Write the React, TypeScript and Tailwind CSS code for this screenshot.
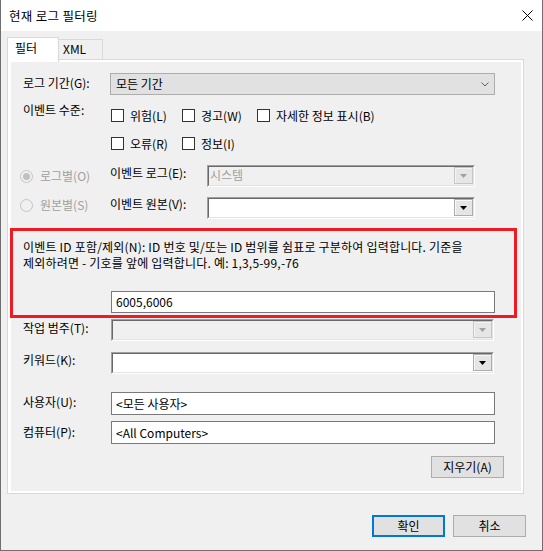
import React from 'react';

// Classic Win32 dialog: "현재 로그 필터링" (Event Viewer filter)

const DropArrow = ({ disabled }: { disabled?: boolean }) => (
  <div
    className={
      disabled
        ? 'flex h-[17px] w-[19px] items-center justify-center border border-[#c6c6c6] bg-[#e6e6e6] shadow-[inset_1px_1px_0_#f4f4f4]'
        : 'flex h-[17px] w-[19px] items-center justify-center border border-[#adadad] bg-[#e5e5e5] shadow-[inset_1px_1px_0_#f8f8f8]'
    }
  >
    <svg width="7" height="4" viewBox="0 0 7 4">
      <polygon points="0,0 7,0 3.5,4" fill={disabled ? '#a0a0a0' : '#000'} />
    </svg>
  </div>
);

// sunken 3D combo box (old style)
const SunkenCombo = ({ className, disabled, text }: { className: string; disabled?: boolean; text?: string }) => (
  <div
    className={`h-[22px] border border-t-[#a0a0a0] border-l-[#a0a0a0] border-r-white border-b-white ${className}`}
  >
    <div
      className={`flex h-full border border-t-[#696969] border-l-[#696969] border-r-[#e3e3e3] border-b-[#e3e3e3] ${
        disabled ? 'bg-[#f0f0f0]' : 'bg-white'
      }`}
    >
      <div className="flex-1 pl-[1px] leading-[16px] text-[#a0a0a0]">{text}</div>
      <DropArrow disabled={disabled} />
    </div>
  </div>
);

const TextBox = ({ className, value }: { className: string; value: string }) => (
  <div className={`flex items-center border border-[#7a7a7a] bg-white pl-[4px] leading-[16px] ${className}`}>
    {value}
  </div>
);

const CheckBox = ({ label, className }: { label: string; className: string }) => (
  <div className={`flex h-[13px] items-center ${className}`}>
    <div className="h-[13px] w-[13px] shrink-0 border border-[#333333] bg-white" />
    <span className="ml-[6px] whitespace-nowrap leading-[16px]">{label}</span>
  </div>
);

const Radio = ({ label, checked }: { label: string; checked?: boolean }) => (
  <div className="flex w-[99px] items-center pl-[9px]">
    <svg width="13" height="13" viewBox="0 0 13 13" className="shrink-0">
      <circle cx="6.5" cy="6.5" r="6" fill="#f0f0f0" stroke="#c4c4c4" />
      {checked && <circle cx="6.5" cy="6.5" r="3.5" fill="#c0c0c0" />}
    </svg>
    <span className="ml-[7px] whitespace-nowrap leading-[16px] text-[#a0a0a0]">{label}</span>
  </div>
);

const Button = ({ label, primary, className }: { label: string; primary?: boolean; className?: string }) => (
  <div
    className={`flex h-[22px] w-[73px] items-center justify-center bg-[#e1e1e1] leading-[16px] ${
      primary ? 'border-2 border-[#0078d7]' : 'border border-[#adadad]'
    } ${className ?? ''}`}
  >
    {label}
  </div>
);

export default function App() {
  return (
    <div className="flex h-[551px] w-[543px] flex-col border-x border-b border-[#6f6f6f] bg-[#f0f0f0] font-['Noto_Sans_CJK_KR','Malgun_Gothic',sans-serif] text-[12px] text-black">
      {/* title bar */}
      <div className="flex h-[31px] shrink-0 items-center justify-between bg-white pl-[8px] pr-[9px]">
        <span className="text-[12.5px] leading-[16px] tracking-[0.3px]">현재 로그 필터링</span>
        <svg width="11" height="11" viewBox="0 0 11 11">
          <path d="M0.5 0.5 L10.5 10.5 M10.5 0.5 L0.5 10.5" stroke="#000" strokeWidth="1" />
        </svg>
      </div>

      {/* tabs */}
      <div className="mt-[6px] flex h-[22px] items-end pl-[6px]">
        <div className="relative z-10 -mb-[3px] h-[25px] w-[52px] border border-b-0 border-[#d9d9d9] bg-white pl-[7px] pt-[2px] leading-[16px]">
          필터
        </div>
        <div className="-ml-px h-[20px] w-[45px] border border-b-0 border-[#d9d9d9] bg-[#f0f0f0] pl-[4px] pt-[1px] leading-[16px]">
          XML
        </div>
      </div>

      {/* tab page */}
      <div className="ml-[6px] h-[435px] w-[517px] border border-[#d9d9d9]">
        <div className="flex h-full flex-col border-b-2 border-l-[3px] border-r-2 border-t-2 border-white bg-[#f0f0f0]">
          {/* 로그 기간 */}
          <div className="mt-[11px] flex items-start pl-[12px]">
            <div className="w-[87px] pt-[2px] leading-[16px]">로그 기간(G):</div>
            <div className="flex h-[22px] w-[385px] items-center justify-between border border-[#adadad] bg-[#e1e1e1] pl-[5px] pr-[5px]">
              <span className="leading-[16px]">모든 기간</span>
              <svg width="8" height="5" viewBox="0 0 8 5">
                <polyline points="0.5,0.5 4,4 7.5,0.5" fill="none" stroke="#606060" strokeWidth="1" />
              </svg>
            </div>
          </div>

          {/* 이벤트 수준 */}
          <div className="mt-[6px] flex items-start pl-[12px]">
            <div className="w-[88px] pt-[1px] leading-[16px]">이벤트 수준:</div>
            <div className="flex flex-col">
              <div className="mt-[8px] flex">
                <CheckBox label="위험(L)" className="w-[71px]" />
                <CheckBox label="경고(W)" className="w-[75px]" />
                <CheckBox label="자세한 정보 표시(B)" className="w-[140px]" />
              </div>
              <div className="mt-[15px] flex">
                <CheckBox label="오류(R)" className="w-[71px]" />
                <CheckBox label="정보(I)" className="w-[75px]" />
              </div>
            </div>
          </div>

          {/* 로그별 / 원본별 */}
          <div className="mt-[15px] flex items-start">
            <div className="mt-[3px]">
              <Radio label="로그별(O)" checked />
            </div>
            <div className="w-[97px] leading-[16px]">이벤트 로그(E):</div>
            <SunkenCombo className="w-[268px]" disabled text="시스템" />
          </div>
          <div className="mt-[10px] flex items-start">
            <div className="mt-[0px]">
              <Radio label="원본별(S)" />
            </div>
            <div className="-mt-px w-[97px] leading-[16px]">이벤트 원본(V):</div>
            <SunkenCombo className="w-[268px]" />
          </div>

          {/* 이벤트 ID (highlighted) */}
          <div className="-ml-px mt-[9px] h-[90px] w-[507px] border-[3px] border-[#ed1c24] pl-[10px] pt-[8px]">
            <div className="whitespace-nowrap leading-[16px] tracking-[0.2px]">
              이벤트 ID 포함/제외(N): ID 번호 및/또는 ID 범위를 쉼표로 구분하여 입력합니다. 기준을
            </div>
            <div className="whitespace-nowrap leading-[16px] tracking-[0.2px]">
              제외하려면 - 기호를 앞에 입력합니다. 예: 1,3,5-99,-76
            </div>
            <TextBox className="ml-[88px] mt-[20px] h-[22px] w-[384px]" value="6005,6006" />
          </div>

          {/* 작업 범주 */}
          <div className="mt-[1px] flex items-start pl-[12px]">
            <div className="w-[88px] pt-[1px] leading-[16px]">작업 범주(T):</div>
            <SunkenCombo className="w-[383px]" disabled />
          </div>

          {/* 키워드 */}
          <div className="mt-[11px] flex items-start pl-[12px]">
            <div className="w-[88px] leading-[16px]">키워드(K):</div>
            <SunkenCombo className="w-[383px]" />
          </div>

          {/* 사용자 / 컴퓨터 */}
          <div className="mt-[18px] flex items-start pl-[12px]">
            <div className="w-[88px] pt-[2px] leading-[16px]">사용자(U):</div>
            <TextBox className="h-[23px] w-[384px]" value="<모든 사용자>" />
          </div>
          <div className="mt-[6px] flex items-start pl-[12px]">
            <div className="w-[88px] pt-[3px] leading-[16px]">컴퓨터(P):</div>
            <TextBox className="h-[23px] w-[384px]" value="<All Computers>" />
          </div>

          <Button label="지우기(A)" className="ml-[420px] mt-[12px] h-[21px]" />
        </div>
      </div>

      {/* dialog buttons */}
      <div className="mt-[21px] flex justify-end gap-[8px] pr-[16px]">
        <Button label="확인" primary />
        <Button label="취소" />
      </div>
    </div>
  );
}
